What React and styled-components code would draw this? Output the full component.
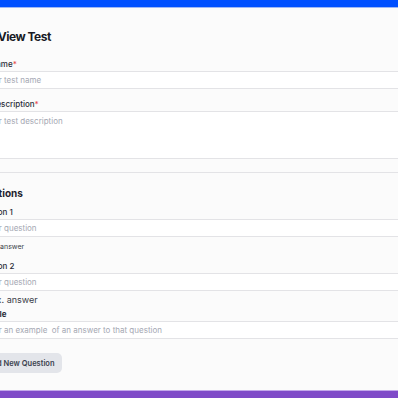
import React from 'react';
import styled, { createGlobalStyle } from 'styled-components';

const GlobalStyle = createGlobalStyle`
  html, body {
    margin: 0;
    padding: 0;
    background: #fbfbfb;
    overflow: hidden;
    font-family: Inter, "Liberation Sans", sans-serif;
    color: #1f2330;
  }
`;

const TopBar = styled.div`
  height: 7px;
  background: #0050ff;
  border-bottom: 1px solid #9fb8f5;
`;

const Page = styled.main`
  margin-left: -27px;
  width: 460px;
  padding-top: 21px;
`;

const Title = styled.h1`
  margin: 0 0 14px 0;
  font-size: 12px;
  font-weight: 700;
  line-height: 16px;
  letter-spacing: -0.5px;
  color: #181a24;
`;

const Field = styled.div`
  display: flex;
  flex-direction: column;
  margin-bottom: ${p => p.gap ?? 0}px;
`;

const Label = styled.label`
  font-size: 8px;
  font-weight: ${p => (p.bold ? 700 : 500)};
  line-height: 10px;
  margin-bottom: 2px;
  color: #2a2d38;
  span { color: #e5484d; }
`;

const Input = styled.input`
  box-sizing: border-box;
  height: 18px;
  border: 1px solid #e3e3e6;
  background: #fff;
  padding: 0 8px;
  font-family: inherit;
  font-size: 8px;
  outline: none;
  &::placeholder { color: #a5a8b3; }
`;

const TextArea = styled.textarea`
  display: block;
  box-sizing: border-box;
  height: 48px;
  border: 1px solid #e3e3e6;
  background: #fff;
  padding: 4px 8px;
  font-family: inherit;
  font-size: 8px;
  resize: none;
  outline: none;
  &::placeholder { color: #a5a8b3; }
`;

const Strip = styled.div`
  height: 13px;
  border-bottom: 1px solid #e3e3e6;
  margin-bottom: 13px;
`;

const SectionTitle = styled.h2`
  margin: 0 0 7px 0;
  font-size: 10px;
  font-weight: 700;
  line-height: 14px;
  color: #1f2330;
`;

const Note = styled.div`
  font-size: ${p => p.size}px;
  line-height: ${p => p.size + 4}px;
  color: #3a3d48;
  margin: ${p => p.m};
`;

const AddButton = styled.button`
  display: block;
  margin-top: 14px;
  height: 20px;
  padding: 0 7px 0 14px;
  border: none;
  border-radius: 5px;
  background: #e3e5ea;
  color: #3a3f4d;
  font-family: inherit;
  font-size: 7.5px;
  font-weight: 600;
`;

const BottomBar = styled.div`
  position: fixed;
  left: 0;
  right: 0;
  bottom: 0;
  height: 7px;
  background: #7f4ac8;
  border-top: 1px solid #c3a8ea;
`;

export default function App() {
  return (
    <>
      <GlobalStyle />
      <TopBar />
      <Page>
        <Title>Edit/View Test</Title>
        <Field gap={10}>
          <Label>Test name<span>*</span></Label>
          <Input placeholder="Enter test name" />
        </Field>
        <Field>
          <Label>Test description<span>*</span></Label>
          <TextArea placeholder="Enter test description" />
        </Field>
        <Strip />
        <SectionTitle>Questions</SectionTitle>
        <Field>
          <Label>Question 1</Label>
          <Input placeholder="Enter question" />
        </Field>
        <Note size={7} m="4px 0 9px 0">Add ex. answer</Note>
        <Field>
          <Label>Question 2</Label>
          <Input placeholder="Enter question" />
        </Field>
        <Note size={9} m="2px 0 3px 0">Edit ex. answer</Note>
        <Field>
          <Label bold>Example</Label>
          <Input placeholder="Enter an example  of an answer to that question" />
        </Field>
        <AddButton>Add New Question</AddButton>
      </Page>
      <BottomBar />
    </>
  );
}
